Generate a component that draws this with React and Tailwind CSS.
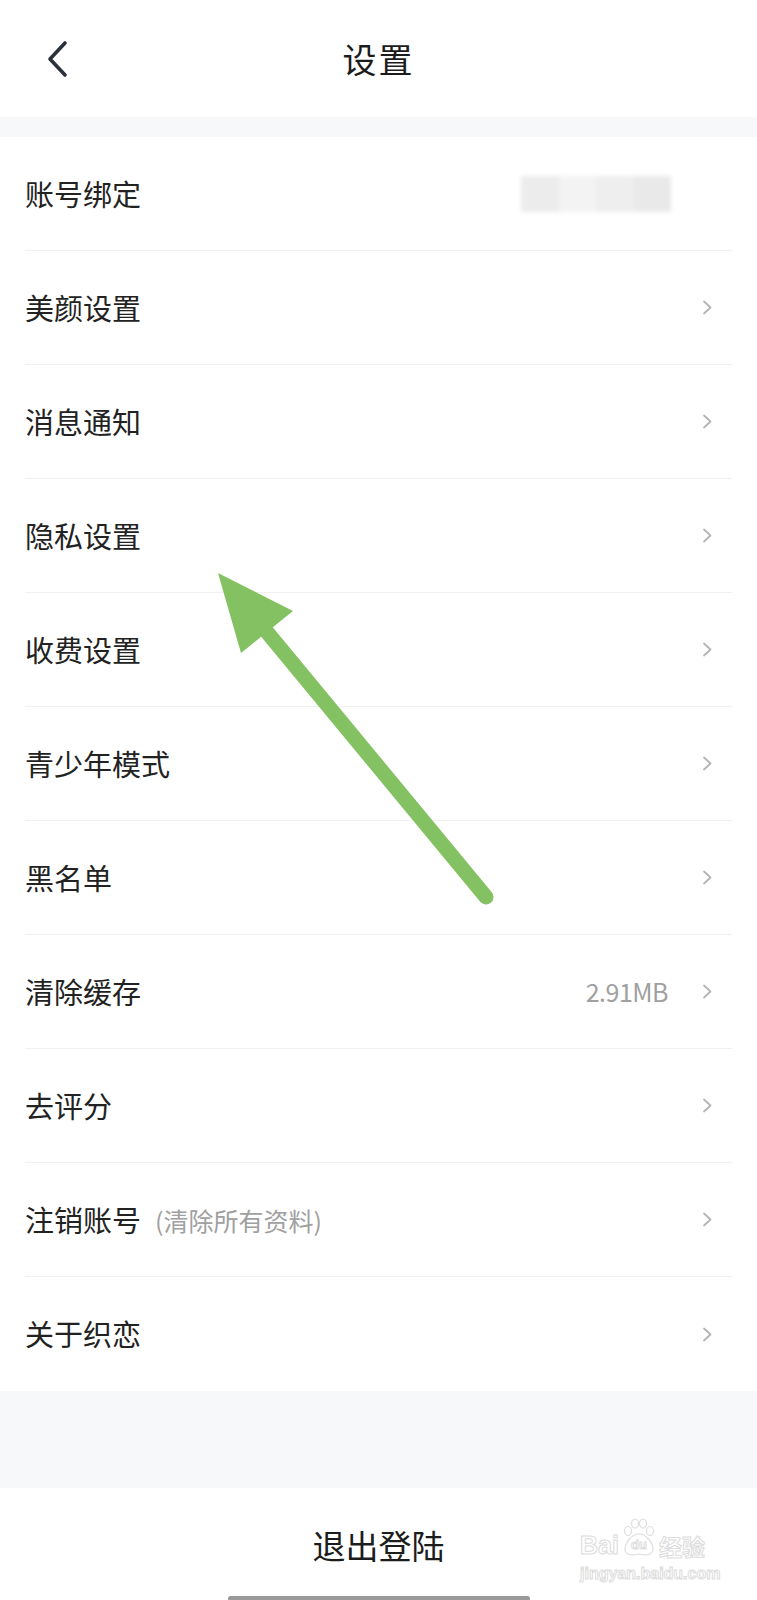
import React from "react";

const rows = [
  { label: "账号绑定", blurred: true, noArrow: true },
  { label: "美颜设置" },
  { label: "消息通知" },
  { label: "隐私设置" },
  { label: "收费设置" },
  { label: "青少年模式" },
  { label: "黑名单" },
  { label: "清除缓存", value: "2.91MB" },
  { label: "去评分" },
  { label: "注销账号", note: "(清除所有资料)" },
  { label: "关于织恋", last: true },
];

function Chevron() {
  return (
    <svg width="11" height="15" viewBox="0 0 11 15" fill="none">
      <polyline points="2,1.5 8.5,7.5 2,13.5" stroke="#b4b4b4" strokeWidth="1.8" strokeLinecap="round" strokeLinejoin="round" />
    </svg>
  );
}

function Row({ row }) {
  return (
    <div
      className={
        "mx-[25px] flex h-[114px] items-center justify-between pr-[19px] " +
        (row.last ? "" : "border-b border-[#f1f1f1]")
      }
    >
      <div className="flex items-center">
        <span className="text-[29px] text-[#222]">{row.label}</span>
        {row.note && <span className="ml-[14px] mt-[2px] text-[25px] text-[#a0a0a0]">{row.note}</span>}
      </div>
      <div className="flex items-center">
        {row.value && <span className="mr-[34px] text-[25px] tracking-[-0.5px] text-[#a0a0a0]">{row.value}</span>}
        {row.blurred && (
          <div className="mr-[42px] flex h-[36px] w-[150px] blur-[2px]">
            <div className="flex-1 bg-[#ececec]" />
            <div className="flex-1 bg-[#f3f3f3]" />
            <div className="flex-1 bg-[#eeeeee]" />
            <div className="flex-1 bg-[#e9e9e9]" />
          </div>
        )}
        {!row.noArrow && <Chevron />}
      </div>
    </div>
  );
}

function Paw() {
  return (
    <svg width="38" height="40" viewBox="0 0 38 40" fill="none" stroke="#dedede" strokeWidth="1.2">
      <ellipse cx="8" cy="13" rx="3.5" ry="4.5" />
      <ellipse cx="15" cy="5.5" rx="3.5" ry="4.5" />
      <ellipse cx="23" cy="5.5" rx="3.5" ry="4.5" />
      <ellipse cx="30" cy="13" rx="3.5" ry="4.5" />
      <path d="M19 16 C 26 16 33 25 33 31 C 33 37 26 38 19 36 C 12 38 5 37 5 31 C 5 25 12 16 19 16 Z" />
    </svg>
  );
}

export default function App() {
  return (
    <div className="relative h-[1600px] w-full overflow-hidden bg-white font-['Noto_Sans_CJK_SC','Noto_Sans',sans-serif]">
      {/* header */}
      <div className="grid h-[117px] grid-cols-[1fr_auto_1fr] items-center">
        <div className="pl-[45px] pt-[1px]">
          <svg width="24" height="38" viewBox="0 0 24 38" fill="none">
            <path d="M20 3 L5 19 L20 35" stroke="#2b303d" strokeWidth="3.6" strokeLinecap="round" strokeLinejoin="round" />
          </svg>
        </div>
        <h1 className="text-[34px] font-normal tracking-[2px] text-[#1c1c1c]">设置</h1>
        <div />
      </div>

      <div className="h-[20px] bg-[#f7f8fa]" />

      <div>
        {rows.map((row) => (
          <Row key={row.label} row={row} />
        ))}
      </div>

      <div className="h-[97px] bg-[#f7f8fa]" />

      {/* logout */}
      <div className="relative flex flex-col">
        <div className="flex h-[108px] items-center justify-center pt-[8px]">
          <span className="text-[33px] text-[#1c1c1c]">退出登陆</span>
        </div>
        <div className="mx-auto h-[5px] w-[302px] rounded-full bg-[#9a9a9a]" />

        {/* watermark */}
        <div className="absolute left-[580px] top-[30px] flex flex-col items-start text-transparent [-webkit-text-stroke:1px_#dcdcdc]">
          <div className="flex items-end leading-none">
            <span className="font-['Liberation_Sans',sans-serif] text-[25px] font-bold">Bai</span>
            <span className="relative mx-[1px] h-[40px] w-[38px]">
              <Paw />
              <span className="absolute left-0 top-[20px] w-[38px] text-center font-['Liberation_Sans',sans-serif] text-[13px] font-bold">
                du
              </span>
            </span>
            <span className="text-[23px] font-bold">经验</span>
          </div>
          <span className="mt-[8px] font-['Liberation_Sans',sans-serif] text-[16px] font-bold leading-none">
            jingyan.baidu.com
          </span>
        </div>
      </div>

      {/* annotation arrow */}
      <svg className="pointer-events-none absolute left-0 top-0" width="757" height="1600" viewBox="0 0 757 1600">
        <line x1="486" y1="897" x2="262" y2="626" stroke="#83c162" strokeWidth="15" strokeLinecap="round" />
        <polygon points="218,573 293,611 241,653" fill="#83c162" />
      </svg>
    </div>
  );
}
